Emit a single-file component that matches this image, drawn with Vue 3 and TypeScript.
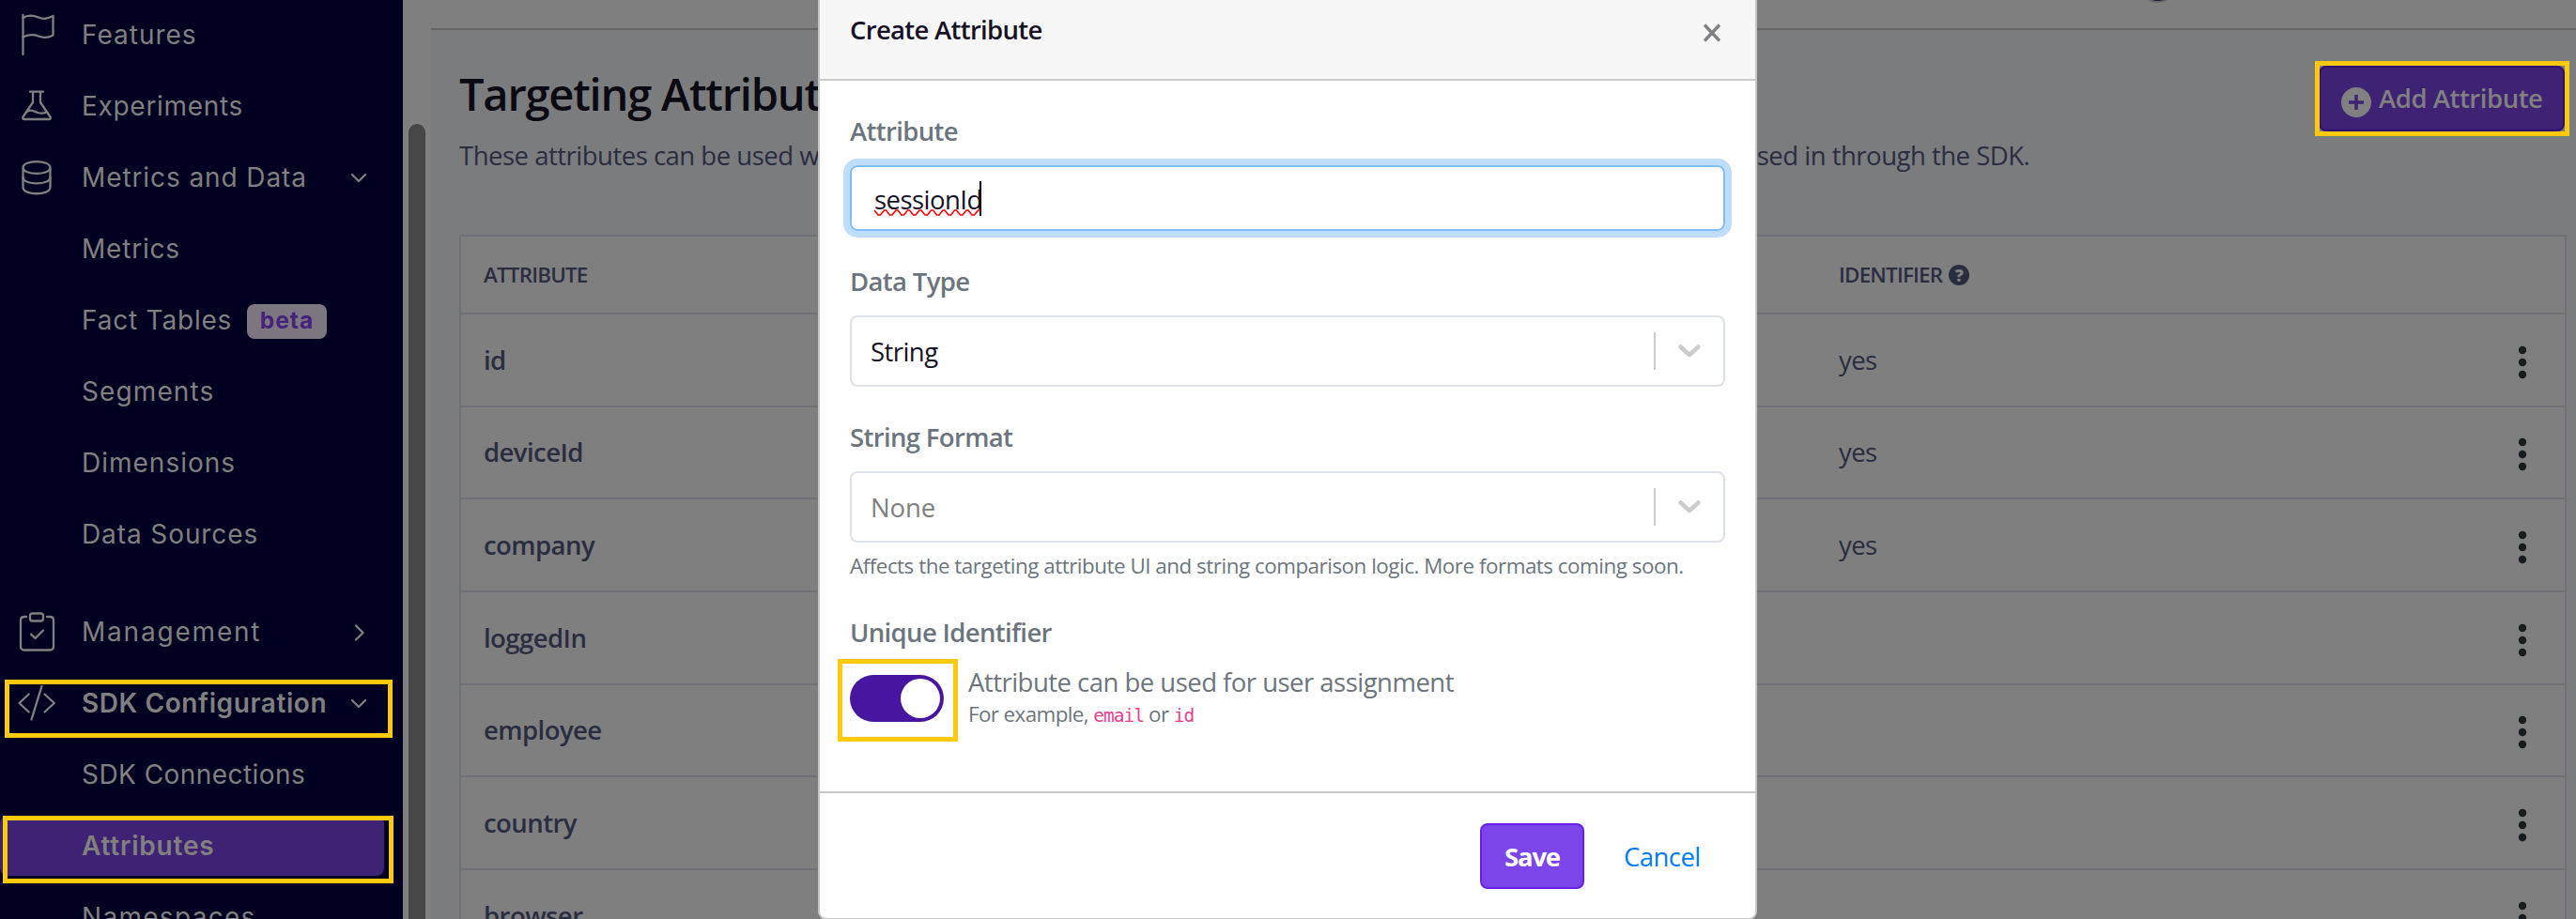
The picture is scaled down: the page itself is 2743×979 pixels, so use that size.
<script setup lang="ts">
interface NavItem {
  label: string
  tracking: number
  icon?: string[]
  chevron?: 'down' | 'right'
  badge?: string
  bold?: boolean
  active?: boolean
  spaced?: boolean
}

const nav: NavItem[] = [
  {
    label: 'Features',
    tracking: 1,
    icon: ['M9.5 3V45', 'M9.5 6C14 3 20 3 26 5.5S36 6.500 41.500 4V24.500C36 27.500 32 28 26 25.500S15 24 9.500 26.500'],
  },
  {
    label: 'Experiments',
    tracking: 0.7,
    icon: ['M17 8.700H31', 'M20 9V20L9.500 35.500Q8.500 38 11 38H37Q39.500 38 38.500 35.500L28 20V9', 'M14.500 29.500C18 27 22 30 25 31S31 32 35 30.500'],
  },
  {
    label: 'Metrics and Data',
    tracking: 0.9,
    chevron: 'down',
    icon: ['M9.500 13.500C9.500 5 38.500 5 38.500 13.500S9.500 22 9.500 13.500V34.500C9.500 43.500 38.500 43.500 38.500 34.500V13.500', 'M9.500 24C9.500 32.500 38.500 32.500 38.500 24'],
  },
  { label: 'Metrics', tracking: 0.8 },
  { label: 'Fact Tables', tracking: 0.8, badge: 'beta' },
  { label: 'Segments', tracking: 1.1 },
  { label: 'Dimensions', tracking: 1 },
  { label: 'Data Sources', tracking: 0.9 },
  {
    label: 'Management',
    tracking: 1.8,
    chevron: 'right',
    spaced: true,
    icon: ['M13 8H11Q7 8 7 12V39.500Q7 43.500 11 43.500H38Q42 43.500 42 39.500V12Q42 8 38 8H35', 'M19.500 4.500H28.500Q31 4.500 31 7V10Q31 12.500 28.500 12.500H19.500Q17 12.500 17 10V7Q17 4.500 19.500 4.500Z', 'M18 26.700L22.500 31L31 22.500'],
  },
  {
    label: 'SDK Configuration',
    tracking: 0.58,
    chevron: 'down',
    bold: true,
    icon: ['M15.700 14.500L5.500 24L15.700 33.500', 'M32.500 14.500L42.800 24L32.500 33.500', 'M29.500 6L18.500 41.500'],
  },
  { label: 'SDK Connections', tracking: 0.45 },
  { label: 'Attributes', tracking: 0.8, bold: true, active: true },
  { label: 'Namespaces', tracking: 1.3 },
]

const attributes = [
  { name: 'id', identifier: 'yes' },
  { name: 'deviceId', identifier: 'yes' },
  { name: 'company', identifier: 'yes' },
  { name: 'loggedIn', identifier: '' },
  { name: 'employee', identifier: '' },
  { name: 'country', identifier: '' },
  { name: 'browser', identifier: '' },
]
</script>

<template>
  <div class="screen">
    <aside class="sidebar">
      <nav class="nav">
        <div
          v-for="item in nav"
          :key="item.label"
          class="nav-item"
          :class="{ bold: item.bold, active: item.active, spaced: item.spaced }"
        >
          <span class="nav-icon">
            <svg v-if="item.icon" width="48" height="48" viewBox="0 0 48 48">
              <path v-for="d in item.icon" :key="d" :d="d" />
            </svg>
          </span>
          <span class="nav-label" :style="{ letterSpacing: item.tracking + 'px' }">{{ item.label }}</span>
          <span v-if="item.badge" class="badge">{{ item.badge }}</span>
          <svg v-if="item.chevron" class="chevron" width="20" height="20" viewBox="0 0 20 20">
            <path v-if="item.chevron === 'down'" d="M3 7L10 14L17 7" />
            <path v-else d="M7 3.500L14.500 11L7 18.500" />
          </svg>
        </div>
      </nav>
    </aside>

    <div class="scroll-track"><div class="scroll-thumb"></div></div>

    <main class="main">
      <div class="topbar"><span class="topbar-dot"></span></div>
      <section class="content">
        <header class="page-head">
          <div>
            <h1>Targeting Attributes</h1>
            <p>These attributes can be used when targeting feature flags and experiments. Attributes set here must also be passed in through the SDK.</p>
          </div>
          <button class="add">
            <svg width="32" height="32" viewBox="0 0 32 32">
              <circle cx="16" cy="16" r="16" fill="#808080" />
              <path d="M8 16H24M16 8V24" stroke="#3e2274" stroke-width="3.500" />
            </svg>
            Add Attribute
          </button>
        </header>
        <div class="table">
          <div class="row head">
            <span>ATTRIBUTE</span>
            <span class="ident">IDENTIFIER <i class="help">?</i></span>
          </div>
          <div v-for="a in attributes" :key="a.name" class="row">
            <span class="name">{{ a.name }}</span>
            <span>{{ a.identifier }}</span>
            <svg class="dots" width="10" height="36" viewBox="0 0 10 36">
              <circle cx="5" cy="5" r="4.200" />
              <circle cx="5" cy="18" r="4.200" />
              <circle cx="5" cy="31" r="4.200" />
            </svg>
          </div>
        </div>
      </section>
    </main>

    <div class="modal">
      <div class="modal-head">
        <h2>Create Attribute</h2>
        <svg width="20" height="20" viewBox="0 0 20 20">
          <path d="M2 1.500L18 18.500M18 1.500L2 18.500" stroke="#808086" stroke-width="3.400" />
        </svg>
      </div>
      <div class="modal-body">
        <div class="label">Attribute</div>
        <div class="input">
          <span class="typed">sessionId
            <svg class="squiggle" width="113" height="8" viewBox="0 0 113 8">
              <path d="M0 1L4 6H6.500L10.500 1H12.500L16.500 6H19L23 1H25L29 6H31.500L35.500 1H37.500L41.500 6H44L48 1H50L54 6H56.500L60.500 1H62.500L66.500 6H69L73 1H75L79 6H81.500L85.500 1H87.500L91.500 6H94L98 1H100L104 6H106.500L110.500 1H113" />
            </svg>
          </span>
          <span class="caret"></span>
        </div>
        <div class="label">Data Type</div>
        <div class="select">
          <span>String</span>
          <i class="sep"></i>
          <svg width="28" height="18" viewBox="0 0 28 18"><path d="M4.500 4.500L14 13L23.500 4.500" /></svg>
        </div>
        <div class="label">String Format</div>
        <div class="select placeholder">
          <span>None</span>
          <i class="sep"></i>
          <svg width="28" height="18" viewBox="0 0 28 18"><path d="M4.500 4.500L14 13L23.500 4.500" /></svg>
        </div>
        <div class="hint">Affects the targeting attribute UI and string comparison logic. More formats coming soon.</div>
        <div class="label unique">Unique Identifier</div>
        <div class="toggle-row">
          <div class="toggle"><span class="knob"></span></div>
          <div>
            <div class="toggle-text">Attribute can be used for user assignment</div>
            <div class="toggle-sub">For example, <code>email</code> or <code>id</code></div>
          </div>
        </div>
      </div>
      <div class="modal-foot">
        <button class="save">Save</button>
        <a class="cancel">Cancel</a>
      </div>
    </div>

    <div class="mark mark-sdk"></div>
    <div class="mark mark-attributes"></div>
    <div class="mark mark-add"></div>
    <div class="mark mark-toggle"></div>
  </div>
</template>

<style>
html,
body {
  margin: 0;
  overflow: hidden;
}
</style>

<style scoped>
.screen {
  position: relative;
  display: flex;
  width: 2743px;
  height: 979px;
  overflow: hidden;
  font-family: "Open Sans", "Noto Sans", sans-serif;
  font-size: 27.5px;
  letter-spacing: -0.55px;
  color: #2a2d40;
}
* {
  box-sizing: border-box;
}
.sidebar {
  flex: none;
  width: 429px;
  background: #000020;
  overflow: hidden;
  font-family: Inter, sans-serif;
  font-size: 28px;
  color: #808080;
}
.nav {
  margin-top: -1px;
}
.nav-item {
  display: flex;
  align-items: center;
  height: 76px;
  padding-left: 15px;
  white-space: nowrap;
}
.nav-item.spaced {
  margin-top: 28px;
}
.nav-item.bold {
  font-weight: 600;
}
.nav-item.active {
  width: 409px;
  height: 64px;
  margin: 6px 0;
  border-radius: 8px;
  background: #3e2274;
}
.nav-icon {
  flex: none;
  width: 72px;
  height: 48px;
}
.nav-icon svg {
  display: block;
}
.nav-icon path,
.chevron path {
  fill: none;
  stroke: #808080;
  stroke-width: 2.3;
  stroke-linecap: round;
  stroke-linejoin: round;
}
.badge {
  width: 85px;
  height: 37px;
  margin: 3px 81px 0 auto;
  border-radius: 8px;
  background: #7c7680;
  color: #45237a;
  font-size: 24.5px;
  font-weight: 700;
  line-height: 35px;
  letter-spacing: 1px;
  text-align: center;
}
.chevron {
  margin-left: auto;
  margin-right: 37px;
}
.scroll-track {
  flex: none;
  width: 30px;
  padding: 132px 6px 0;
  background: #7f7f7f;
}
.scroll-thumb {
  width: 18px;
  height: 900px;
  border-radius: 9px;
  background: #464646;
}
.main {
  flex: 1;
  min-width: 0;
  background: #7b7c7e;
}
.topbar {
  height: 32px;
  background: #7f7f7f;
  border-bottom: 2px solid #656565;
}
.topbar-dot {
  position: absolute;
  left: 2277px;
  top: -38px;
  width: 41px;
  height: 41px;
  border: 2px solid #66656c;
  border-radius: 50%;
  background: #1c1a26;
}
.content {
  padding: 38px 10px 0 30px;
}
.page-head {
  display: flex;
  justify-content: space-between;
  height: 180px;
  padding-right: 2px;
  white-space: nowrap;
}
h1 {
  margin: 1px 0 0;
  font-size: 47px;
  font-weight: 600;
  line-height: 58px;
  letter-spacing: -1.2px;
  color: #0b0911;
}
.page-head p {
  margin: 16px 0 0;
  line-height: 42px;
  letter-spacing: -0.5px;
}
.add {
  display: flex;
  align-items: center;
  gap: 8px;
  width: 262px;
  height: 70px;
  padding: 0 0 1px 22px;
  border: 2px solid #2f1070;
  border-radius: 8px;
  background: #3e2274;
  color: #808080;
  font: 600 27.5px "Open Sans", sans-serif;
  letter-spacing: -0.45px;
}
.add svg {
  position: relative;
  top: 4px;
  flex: none;
}
.table {
  border: 2px solid #707178;
  background: #7f7f7f;
}
.row {
  display: grid;
  grid-template-columns: 1443px 1fr 10px;
  align-items: center;
  height: 98.67px;
  padding: 0 40px 0 24px;
  border-top: 2px solid #707178;
}
.row.head {
  height: 81px;
  border-top: 0;
  font-size: 22.4px;
  font-weight: 600;
  letter-spacing: -0.8px;
}
.name {
  font-weight: 600;
}
.ident {
  display: flex;
  align-items: center;
  gap: 7px;
}
.help {
  width: 22px;
  height: 22px;
  border-radius: 50%;
  background: #2a2d40;
  color: #7f7f7f;
  font-size: 18px;
  font-style: normal;
  font-weight: 800;
  line-height: 22px;
  letter-spacing: 0;
  text-align: center;
}
.dots {
  margin-top: 5px;
  fill: #161d1f;
}
.modal {
  position: absolute;
  left: 871px;
  top: -20px;
  width: 1000px;
  height: 1000px;
  border: 2px solid #c8c8c8;
  border-radius: 9px;
  background: #fff;
  white-space: nowrap;
}
.modal-head {
  display: flex;
  justify-content: space-between;
  height: 104px;
  padding: 0 36px 0 32px;
  border-bottom: 2px solid #c8c8c8;
  border-radius: 7px 7px 0 0;
  background: #f7f7f7;
}
.modal-head h2 {
  margin: 29px 0 0;
  font-size: 27.5px;
  font-weight: 600;
  line-height: 42px;
  letter-spacing: -0.7px;
  color: #161126;
}
.modal-head svg {
  margin-top: 43px;
}
.modal-body {
  height: 757px;
  padding: 32px 32px 0;
  color: #6c757d;
}
.label {
  height: 58px;
  padding-top: 1px;
  line-height: 42px;
  font-weight: 600;
  letter-spacing: -0.65px;
}
.input {
  display: flex;
  align-items: center;
  height: 70px;
  margin-bottom: 32px;
  padding: 3px 0 0 24px;
  border: 2px solid #80bdff;
  border-radius: 8px;
  box-shadow: 0 0 0 7px #bfdeff;
  color: #161126;
}
.typed {
  position: relative;
  width: 112px;
}
.squiggle {
  position: absolute;
  left: 0;
  top: 29px;
  fill: none;
  stroke: #f00;
  stroke-width: 1.6;
}
.caret {
  width: 2px;
  height: 37px;
  margin-top: -3px;
  background: #000;
}
.select {
  display: flex;
  align-items: center;
  height: 76px;
  margin-bottom: 32px;
  padding: 0 22px 0 20px;
  border: 2px solid #dee2e6;
  border-radius: 8px;
  color: #161126;
}
.select.placeholder {
  margin-bottom: 7px;
  color: #808080;
}
.placeholder span {
  letter-spacing: -0.1px;
}
.sep {
  width: 2px;
  height: 40px;
  margin-left: auto;
  margin-right: 22px;
  background: #ccc;
}
.select svg path {
  fill: none;
  stroke: #ccc;
  stroke-width: 4.5;
  stroke-linecap: round;
  stroke-linejoin: round;
}
.hint {
  height: 67px;
  padding-top: 1px;
  font-size: 22.4px;
  line-height: 34px;
  letter-spacing: -0.48px;
}
.label.unique {
  height: 57px;
}
.toggle-row {
  display: flex;
  gap: 26px;
}
.toggle {
  width: 100px;
  height: 50px;
  margin-top: 10px;
  padding: 4px;
  border-radius: 25px;
  background: #4715a0;
}
.knob {
  display: block;
  width: 42px;
  height: 42px;
  margin-left: auto;
  border-radius: 50%;
  background: #fff;
}
.toggle-text {
  height: 37px;
  padding-top: 1px;
  line-height: 34px;
  letter-spacing: -0.52px;
}
.toggle-sub {
  font-size: 22.4px;
  line-height: 30px;
  letter-spacing: -0.6px;
}
code {
  font-family: "DejaVu Sans Mono", monospace;
  font-size: 19.5px;
  letter-spacing: -1px;
  color: #e83e8c;
}
.modal-foot {
  display: flex;
  padding: 32px 0 0 703px;
  border-top: 2px solid #c8c8c8;
}
.save {
  width: 111px;
  height: 70px;
  padding: 0;
  border: 2px solid #6420e8;
  border-radius: 8px;
  background: #7c45ea;
  color: #fff;
  font: 700 27.5px "Open Sans", sans-serif;
  letter-spacing: -1.2px;
}
.cancel {
  margin-left: 42px;
  line-height: 72px;
  color: #007bff;
}
.mark {
  position: absolute;
  border: 5px solid #ffc90e;
}
.mark-sdk {
  left: 5px;
  top: 724px;
  width: 413px;
  height: 62px;
}
.mark-attributes {
  left: 3px;
  top: 869px;
  width: 416px;
  height: 72px;
}
.mark-add {
  left: 2465px;
  top: 65px;
  width: 271px;
  height: 80px;
}
.mark-toggle {
  left: 892px;
  top: 702px;
  width: 128px;
  height: 88px;
}
</style>
